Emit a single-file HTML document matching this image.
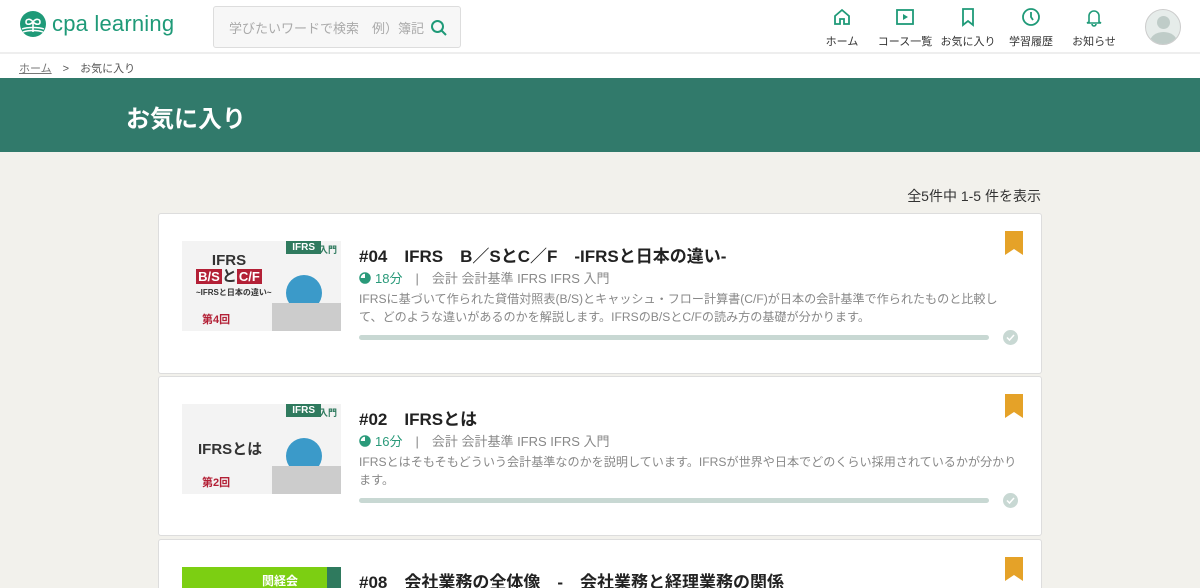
<!DOCTYPE html>
<html><head><meta charset="utf-8"><style>
*{box-sizing:border-box;margin:0;padding:0}
html,body{width:1200px;height:588px;overflow:hidden}
body{background:#f2f1ec;font-family:"Liberation Sans","Noto Sans CJK JP",sans-serif;color:#333;position:relative}
.hdr{position:absolute;top:0;left:0;width:1200px;height:54px;background:#fff;border-bottom:2px solid #eee}
.logo{position:absolute;left:19px;top:10px;display:flex;align-items:center}
.logo span{font-size:22px;color:#1f9a78;margin-left:5px;letter-spacing:0.2px}
.search{position:absolute;left:213px;top:6px;width:248px;height:42px;background:#f7f7f7;border:1px solid #ddd;border-radius:3px;font-size:13px;color:#aaa;padding:11px 0 0 15px}
.search svg{position:absolute;right:12px;top:12px}
.nav{position:absolute;top:7px;text-align:center;font-size:11px;color:#333;width:70px}
.nav svg{display:block;margin:0 auto 6px}
.avatar{position:absolute;left:1145px;top:9px;width:36px;height:36px;border-radius:50%;background:#e6ecea;border:1px solid #ccc;overflow:hidden}
.bc{position:absolute;top:54px;left:0;width:1200px;height:24px;background:#fff;font-size:11px;color:#555;padding:6px 0 0 19px}
.bc u{color:#777}
.band{position:absolute;top:78px;left:0;width:1200px;height:74px;background:#317a6b;color:#fff;font-size:24px;font-weight:bold;padding:21px 0 0 126px}
.count{position:absolute;top:186px;right:159px;font-size:14px;color:#333}
.card{position:absolute;left:158px;width:884px;background:#fff;border:1px solid #ddd;border-radius:3px}
.thumb{position:absolute;left:23px;top:27px;width:159px;height:90px;background:#f3f3f3;overflow:hidden}
.t{position:absolute;left:200px;top:28px;font-size:17px;font-weight:bold;color:#222}
.meta{position:absolute;left:200px;top:54px;font-size:13px;color:#888;display:flex;align-items:center}
.meta b{color:#2a9a7a;font-weight:normal;display:flex;align-items:center;gap:4px}
.desc{position:absolute;left:200px;top:76px;width:700px;font-size:12.1px;line-height:18px;color:#888;white-space:nowrap}
.bar{position:absolute;left:200px;top:121px;width:630px;height:5px;border-radius:3px;background:#c8d8d3}
.chk{position:absolute;left:844px;top:116px}
.bm{position:absolute;left:846px;top:17px}
</style></head><body>
<div class="hdr">
 <div class="logo"><svg width="28" height="28" viewBox="0 0 28 28"><circle cx="14" cy="14" r="13" fill="#1f9a78"/><path d="M14 22V12M14 12c-3-4-7-3-7 0s4 3 7 0c3-4 7-3 7 0s-4 3-7 0" stroke="#fff" stroke-width="1.6" fill="none"/><path d="M3 19c5-2 17-2 22 0M4 22c5-2 15-2 20 0" stroke="#fff" stroke-width="1.4" fill="none"/></svg><span>cpa learning</span></div>
 <div class="search">学びたいワードで検索　例）簿記<svg width="18" height="18" viewBox="0 0 18 18"><circle cx="7.5" cy="7.5" r="5.5" stroke="#1f9a78" stroke-width="2" fill="none"/><path d="M11.5 11.5L16 16" stroke="#1f9a78" stroke-width="2"/></svg></div>
 <div class="nav" style="left:807px"><svg width="20" height="20" viewBox="0 0 20 20"><path d="M3 9L10 3l7 6v8H12v-5H8v5H3z" stroke="#1f9a78" stroke-width="1.8" fill="none"/></svg>ホーム</div>
 <div class="nav" style="left:870px"><svg width="20" height="20" viewBox="0 0 20 20"><rect x="2" y="3" width="16" height="14" stroke="#1f9a78" stroke-width="1.8" fill="none"/><path d="M8 7v6l5-3z" fill="#1f9a78"/></svg>コース一覧</div>
 <div class="nav" style="left:933px"><svg width="20" height="20" viewBox="0 0 20 20"><path d="M5 2h10v16l-5-4-5 4z" stroke="#1f9a78" stroke-width="1.8" fill="none"/></svg>お気に入り</div>
 <div class="nav" style="left:996px"><svg width="20" height="20" viewBox="0 0 20 20"><circle cx="10" cy="10" r="8" stroke="#1f9a78" stroke-width="1.8" fill="none"/><path d="M10 5v5l2 3" stroke="#1f9a78" stroke-width="1.8" fill="none"/></svg>学習履歴</div>
 <div class="nav" style="left:1059px"><svg width="20" height="20" viewBox="0 0 20 20"><path d="M5 15V9a5 5 0 0110 0v6l2 1H3z M8 17a2 2 0 004 0" stroke="#1f9a78" stroke-width="1.6" fill="none"/></svg>お知らせ</div>
 <div class="avatar"><div style="position:absolute;left:11px;top:6px;width:13px;height:13px;border-radius:50%;background:#bfccc8"></div><div style="position:absolute;left:4px;top:22px;width:27px;height:20px;border-radius:50%;background:#bfccc8"></div></div>
</div>
<div class="bc"><u>ホーム</u>　&gt;　お気に入り</div>
<div class="band">お気に入り</div>
<div class="count">全5件中 1-5 件を表示</div>

<div class="card" style="top:213px;height:161px">
 <div class="thumb"><div style="position:absolute;right:20px;top:0;background:#2f7a5e;color:#fff;font-size:10px;font-weight:bold;padding:1px 6px">IFRS</div><div style="position:absolute;right:4px;top:2px;color:#2f7a5e;font-size:9px;font-weight:bold">入門</div>
 <div style="position:absolute;left:14px;top:12px;width:66px;text-align:center;font-size:15px;font-weight:bold;color:#333;line-height:16px">IFRS<br><span style="background:#b32036;color:#fff;font-size:13px;padding:0 2px">B/S</span>と<span style="background:#b32036;color:#fff;font-size:13px;padding:0 2px">C/F</span></div>
 <div style="position:absolute;left:14px;top:46px;font-size:8px;font-weight:bold">~IFRSと日本の違い~</div>
 <div style="position:absolute;left:20px;top:70px;font-size:11px;font-weight:bold;color:#b32036">第4回</div>
 <div style="position:absolute;left:104px;top:34px;width:36px;height:36px;border-radius:50%;background:#3b9ac9"></div><div style="position:absolute;left:90px;top:62px;width:69px;height:28px;background:#ccc"></div></div>
 <div class="t">#04　IFRS　B／SとC／F　-IFRSと日本の違い-</div>
 <div class="meta"><b><svg width="12" height="12" viewBox="0 0 12 12"><circle cx="6" cy="6" r="5" stroke="#2a9a7a" stroke-width="1.5" fill="none"/><path d="M6 6V1a5 5 0 11-5 5z" fill="#2a9a7a"/></svg>18分</b>　|　会計 会計基準 IFRS IFRS 入門</div>
 <div class="desc">IFRSに基づいて作られた貸借対照表(B/S)とキャッシュ・フロー計算書(C/F)が日本の会計基準で作られたものと比較し<br>て、どのような違いがあるのかを解説します。IFRSのB/SとC/Fの読み方の基礎が分かります。</div>
 <div class="bar"></div><svg class="chk" width="15" height="15" viewBox="0 0 15 15"><circle cx="7.5" cy="7.5" r="7.5" fill="#c8d8d3"/><path d="M4 7.5l2.5 2.5 4.5-5" stroke="#fff" stroke-width="1.5" fill="none"/></svg>
 <svg class="bm" width="18" height="24" viewBox="0 0 18 24"><path d="M0 0h18v24l-9-6-9 6z" fill="#e5a228"/></svg>
</div>

<div class="card" style="top:376px;height:160px">
 <div class="thumb"><div style="position:absolute;right:20px;top:0;background:#2f7a5e;color:#fff;font-size:10px;font-weight:bold;padding:1px 6px">IFRS</div><div style="position:absolute;right:4px;top:2px;color:#2f7a5e;font-size:9px;font-weight:bold">入門</div>
 <div style="position:absolute;left:16px;top:34px;font-size:15px;font-weight:bold">IFRSとは</div>
 <div style="position:absolute;left:20px;top:70px;font-size:11px;font-weight:bold;color:#b32036">第2回</div>
 <div style="position:absolute;left:104px;top:34px;width:36px;height:36px;border-radius:50%;background:#3b9ac9"></div><div style="position:absolute;left:90px;top:62px;width:69px;height:28px;background:#ccc"></div></div>
 <div class="t">#02　IFRSとは</div>
 <div class="meta"><b><svg width="12" height="12" viewBox="0 0 12 12"><circle cx="6" cy="6" r="5" stroke="#2a9a7a" stroke-width="1.5" fill="none"/><path d="M6 6V1a5 5 0 11-5 5z" fill="#2a9a7a"/></svg>16分</b>　|　会計 会計基準 IFRS IFRS 入門</div>
 <div class="desc">IFRSとはそもそもどういう会計基準なのかを説明しています。IFRSが世界や日本でどのくらい採用されているかが分かり<br>ます。</div>
 <div class="bar"></div><svg class="chk" width="15" height="15" viewBox="0 0 15 15"><circle cx="7.5" cy="7.5" r="7.5" fill="#c8d8d3"/><path d="M4 7.5l2.5 2.5 4.5-5" stroke="#fff" stroke-width="1.5" fill="none"/></svg>
 <svg class="bm" width="18" height="24" viewBox="0 0 18 24"><path d="M0 0h18v24l-9-6-9 6z" fill="#e5a228"/></svg>
</div>

<div class="card" style="top:539px;height:160px">
 <div class="thumb" style="background:#7ccf12"><div style="position:absolute;right:0;top:0;width:14px;height:90px;background:#2f7a5e"></div><div style="position:absolute;left:80px;top:5px;color:#fff;font-size:12px;font-weight:bold">関経会</div></div>
 <div class="t">#08　会社業務の全体像　-　会社業務と経理業務の関係</div>
 <svg class="bm" width="18" height="24" viewBox="0 0 18 24"><path d="M0 0h18v24l-9-6-9 6z" fill="#e5a228"/></svg>
</div>
</body></html>
